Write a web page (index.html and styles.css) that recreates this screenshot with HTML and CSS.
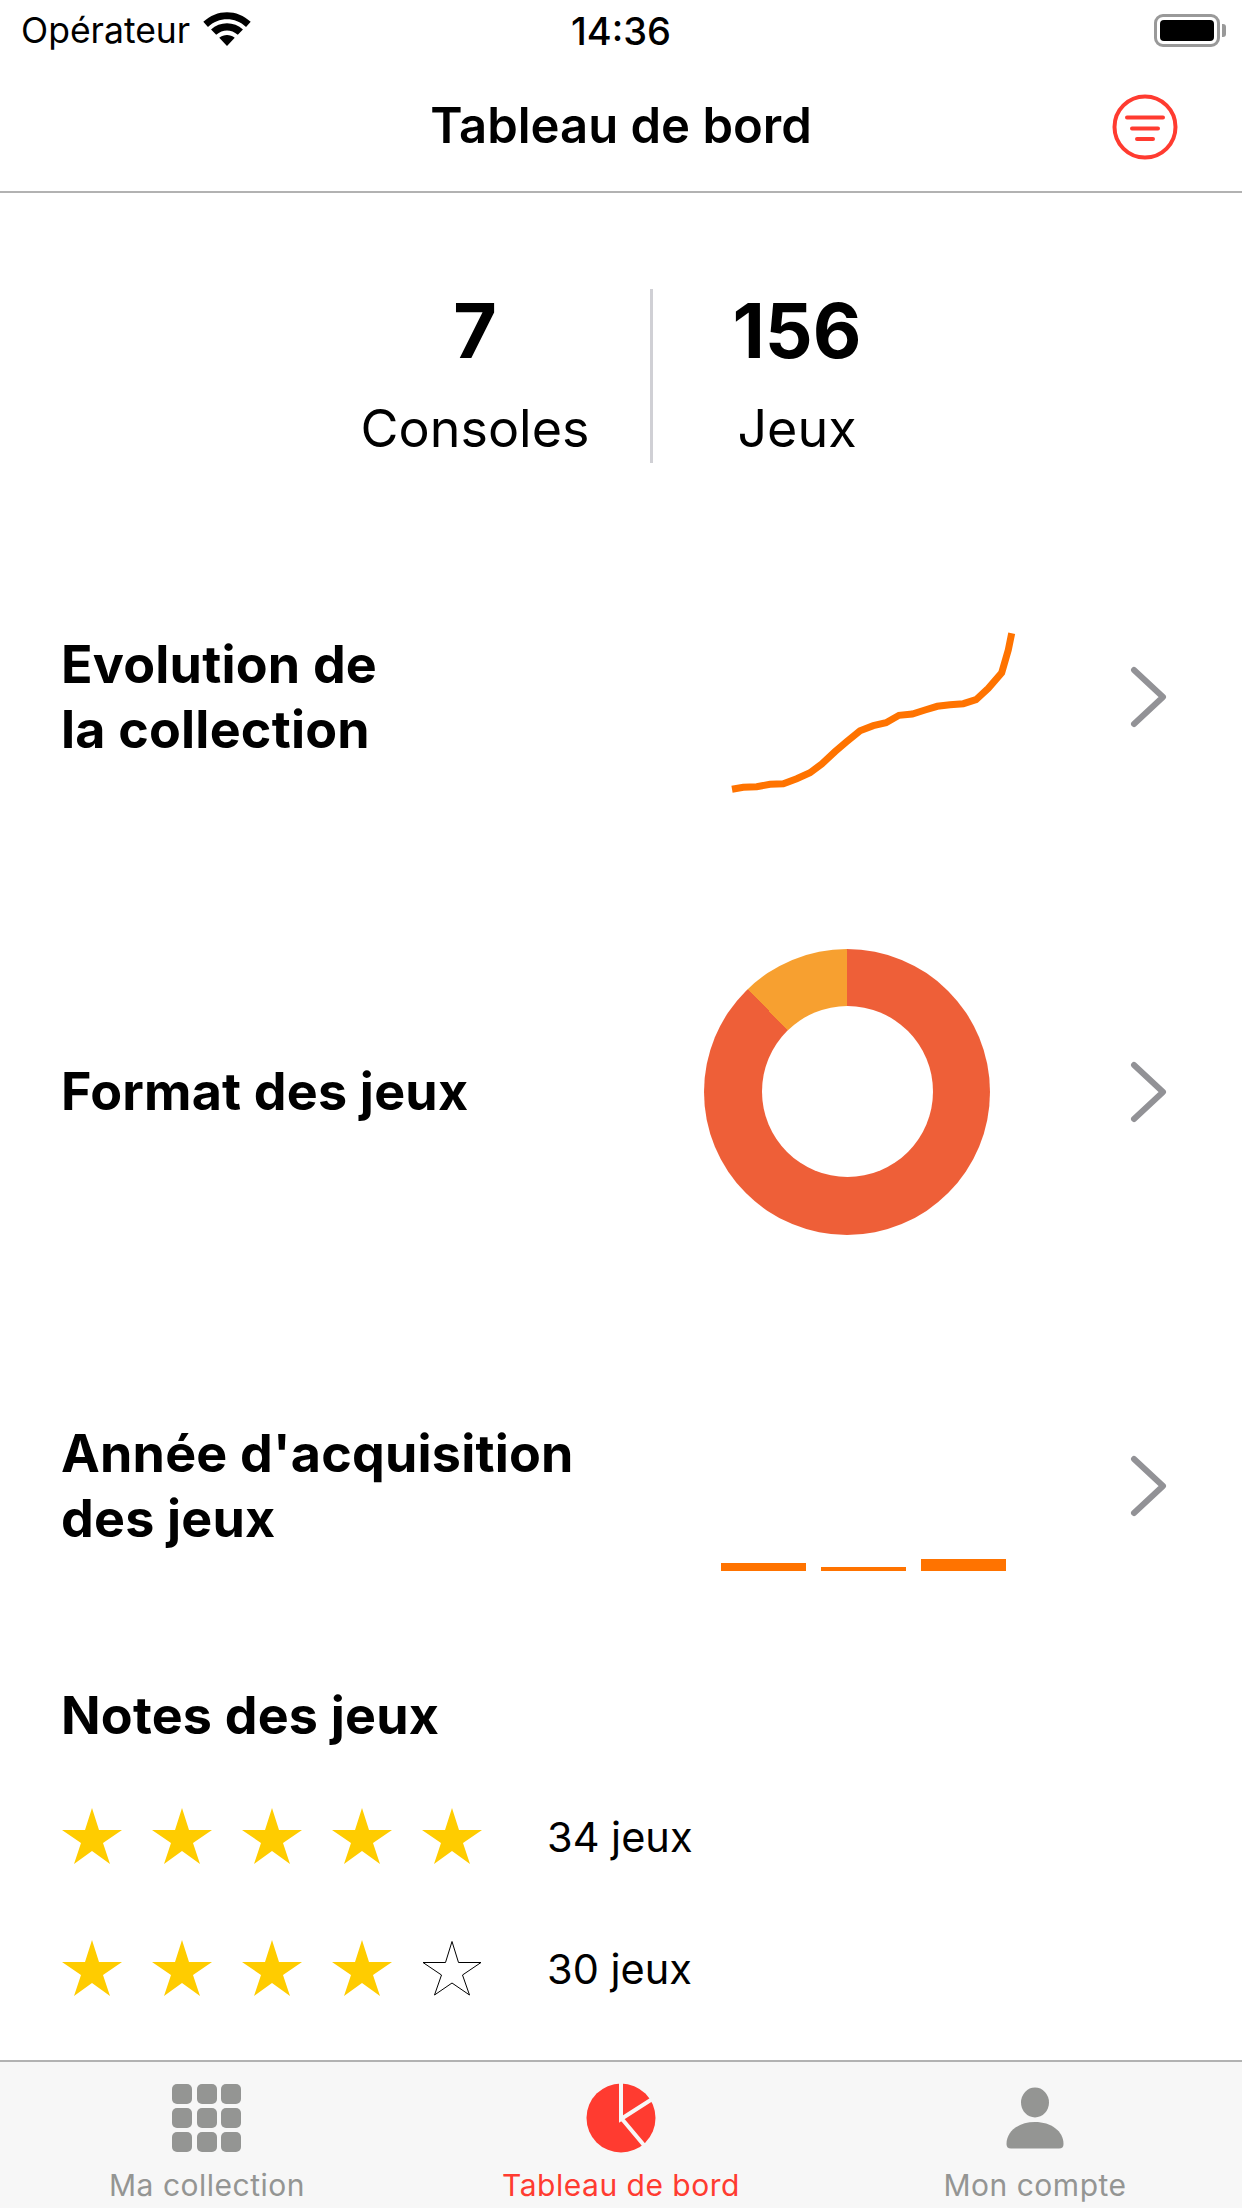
FILE: index.html
```html
<!DOCTYPE html>
<html lang="fr">
<head>
    <meta charset="UTF-8">
    <meta name="viewport" content="width=device-width, initial-scale=1.0">
    <title>Tableau de bord</title>
    <link rel="stylesheet" href="styles.css">
</head>
<body>
    <!-- Status bar -->
    <div class="status-bar">
        <div class="status-left">
            <span>Opérateur</span>
            <svg class="wifi-icon" width="48" height="35" viewBox="0 0 46 34">
                <path d="M0 9.5 C13 -3 33 -3 46 9.5 L41.5 14.500 C31 4.500 15 4.500 4.5 14.500 Z" fill="#000"/>
                <path d="M7.500 17 C16 9 30 9 38.500 17 L33.500 22 C27 16.500 19 16.500 12.500 22 Z" fill="#000"/>
                <path d="M15.500 25 C20 21.500 26 21.500 30.500 25 L23 33 Z" fill="#000"/>
            </svg>
        </div>
        <div class="status-time">14:36</div>
        <div class="status-right">
            <div class="battery"><div class="battery-level"></div></div>
            <div class="battery-cap"></div>
        </div>
    </div>

    <!-- Header -->
    <header class="nav-bar">
        <h1>Tableau de bord</h1>
        <svg class="filter-icon" width="66" height="66" viewBox="0 0 66 66">
            <circle cx="33" cy="33" r="30.500" fill="none" stroke="#ff3b30" stroke-width="4"/>
            <path d="M15 23.500 H51 M20 34.500 H46 M25 45 H41" stroke="#ff3b30" stroke-width="4" stroke-linecap="round"/>
        </svg>
    </header>

    <main>
        <!-- Counters -->
        <section class="counters">
            <div class="counter">
                <div class="counter-value">7</div>
                <div class="counter-label">Consoles</div>
            </div>
            <div class="counter">
                <div class="counter-value">156</div>
                <div class="counter-label">Jeux</div>
            </div>
        </section>

        <!-- Evolution -->
        <section class="chart-row">
            <h2>Evolution de<br>la collection</h2>
            <svg class="chart" width="310" height="190" viewBox="0 0 310 190">
                <polyline class="trend-line" points="28,187.300 39.300,185.300 52.700,184.700 66,182.300 79.300,181.700 92.700,176.700 106,170.700 117.700,162 131,149.700 142.700,139.700 156,128.700 169.300,123.700 182,120.700 195,113.300 208.300,112 221,108 233.300,104.300 246,102.700 259.300,101.700 272,97.700 284.300,86.300 297.700,70.700 304.300,48 307.700,31.300"/>
            </svg>
            <svg class="chevron" width="38" height="62" viewBox="0 0 38 62">
                <path d="M4 4 L33 31 L4 58" fill="none" stroke="#929296" stroke-width="6" stroke-linecap="round" stroke-linejoin="round"/>
            </svg>
        </section>

        <!-- Format -->
        <section class="chart-row">
            <h2>Format des jeux</h2>
            <div class="donut"><div class="donut-hole"></div></div>
            <svg class="chevron" width="38" height="62" viewBox="0 0 38 62">
                <path d="M4 4 L33 31 L4 58" fill="none" stroke="#929296" stroke-width="6" stroke-linecap="round" stroke-linejoin="round"/>
            </svg>
        </section>

        <!-- Acquisition -->
        <section class="chart-row">
            <h2>Année d'acquisition<br>des jeux</h2>
            <div class="bars">
                <div class="bar" style="height: 8px"></div>
                <div class="bar" style="height: 4px"></div>
                <div class="bar" style="height: 12px"></div>
            </div>
            <svg class="chevron" width="38" height="62" viewBox="0 0 38 62">
                <path d="M4 4 L33 31 L4 58" fill="none" stroke="#929296" stroke-width="6" stroke-linecap="round" stroke-linejoin="round"/>
            </svg>
        </section>

        <!-- Ratings -->
        <section class="ratings">
            <h2>Notes des jeux</h2>
            <div class="rating-row">
                <div class="stars">
                    <svg class="star" viewBox="0 0 60 56"><polygon points="30,0 37,22 60,22 41,35 48,56 30,43 12,56 19,35 0,22 23,22"/></svg>
                    <svg class="star" viewBox="0 0 60 56"><polygon points="30,0 37,22 60,22 41,35 48,56 30,43 12,56 19,35 0,22 23,22"/></svg>
                    <svg class="star" viewBox="0 0 60 56"><polygon points="30,0 37,22 60,22 41,35 48,56 30,43 12,56 19,35 0,22 23,22"/></svg>
                    <svg class="star" viewBox="0 0 60 56"><polygon points="30,0 37,22 60,22 41,35 48,56 30,43 12,56 19,35 0,22 23,22"/></svg>
                    <svg class="star" viewBox="0 0 60 56"><polygon points="30,0 37,22 60,22 41,35 48,56 30,43 12,56 19,35 0,22 23,22"/></svg>
                </div>
                <span class="rating-count">34 jeux</span>
            </div>
            <div class="rating-row">
                <div class="stars">
                    <svg class="star" viewBox="0 0 60 56"><polygon points="30,0 37,22 60,22 41,35 48,56 30,43 12,56 19,35 0,22 23,22"/></svg>
                    <svg class="star" viewBox="0 0 60 56"><polygon points="30,0 37,22 60,22 41,35 48,56 30,43 12,56 19,35 0,22 23,22"/></svg>
                    <svg class="star" viewBox="0 0 60 56"><polygon points="30,0 37,22 60,22 41,35 48,56 30,43 12,56 19,35 0,22 23,22"/></svg>
                    <svg class="star" viewBox="0 0 60 56"><polygon points="30,0 37,22 60,22 41,35 48,56 30,43 12,56 19,35 0,22 23,22"/></svg>
                    <svg class="star empty" viewBox="0 0 60 56"><polygon points="30,1.500 36.500,22.500 59,22.500 40.500,35 47.500,55 30,43 12.500,55 19.500,35 1,22.500 23.500,22.500"/></svg>
                </div>
                <span class="rating-count">30 jeux</span>
            </div>
        </section>
    </main>

    <!-- Tab bar -->
    <nav class="tab-bar">
        <div class="tab">
            <div class="tab-icon">
                <div class="grid-icon">
                    <span></span><span></span><span></span>
                    <span></span><span></span><span></span>
                    <span></span><span></span><span></span>
                </div>
            </div>
            <div class="tab-label">Ma collection</div>
        </div>
        <div class="tab active">
            <div class="tab-icon">
                <svg width="70" height="70" viewBox="0 0 70 70">
                    <circle cx="35" cy="35" r="34.500" fill="#ff3b30"/>
                    <path d="M35 -2 V36 L71 13 M36 36 L62 67" fill="none" stroke="#f7f7f7" stroke-width="4"/>
                </svg>
            </div>
            <div class="tab-label">Tableau de bord</div>
        </div>
        <div class="tab">
            <div class="tab-icon">
                <svg width="58" height="62" viewBox="0 0 58 62">
                    <ellipse cx="29" cy="15.500" rx="14" ry="15" fill="#949593"/>
                    <path d="M0.500 57 C0.500 44 13 35 29 35 C45 35 57.500 44 57.500 57 Q57.500 61.500 53 61.500 H5 Q0.500 61.500 0.500 57 Z" fill="#949593"/>
                </svg>
            </div>
            <div class="tab-label">Mon compte</div>
        </div>
    </nav>
</body>
</html>
```

FILE: styles.css
```css
/* General Styles */
* {
    box-sizing: border-box;
}

body {
    margin: 0;
    width: 1242px;
    height: 2208px;
    overflow: hidden;
    display: flex;
    flex-direction: column;
    background-color: #ffffff;
    color: #000000;
    font-family: Inter, "Liberation Sans", sans-serif;
}

/* Status bar */
.status-bar {
    height: 60px;
    display: grid;
    grid-template-columns: 1fr auto 1fr;
    align-items: center;
    font-size: 35.5px;
}

.status-left {
    display: flex;
    align-items: center;
    gap: 13px;
    padding-left: 21px;
}

.wifi-icon {
    margin-top: -2px;
}

.status-time {
    font-size: 38px;
    font-weight: 500;
    margin-top: 2px;
}

.status-right {
    display: flex;
    align-items: center;
    justify-content: flex-end;
    gap: 2px;
    padding-right: 16px;
}

.battery {
    width: 66px;
    height: 33px;
    padding: 3px;
    border: 3px solid #999999;
    border-radius: 9px;
}

.battery-level {
    height: 100%;
    background-color: #000000;
    border-radius: 4px;
}

.battery-cap {
    width: 4px;
    height: 13px;
    background-color: #999999;
    border-radius: 0 3px 3px 0;
}

/* Header */
.nav-bar {
    position: relative;
    height: 133px;
    display: flex;
    align-items: center;
    justify-content: center;
    border-bottom: 2px solid #b2b2b2;
}

.nav-bar h1 {
    margin: 0;
    font-size: 49px;
    font-weight: 600;
}

.filter-icon {
    position: absolute;
    right: 64px;
    top: 34px;
}

/* Main content */
main {
    flex: 1;
    overflow: hidden;
    display: flex;
    flex-direction: column;
}

h2 {
    margin: 0;
    font-size: 52px;
    line-height: 65px;
    font-weight: 700;
    letter-spacing: 0.2px;
}

/* Counters */
.counters {
    display: grid;
    grid-template-columns: 353px 288px;
    padding-left: 300px;
    margin: 96px 0 91px 0;
}

.counter {
    height: 174px;
    text-align: center;
}

.counter:first-child {
    border-right: 3px solid #d0d0d5;
}

.counter-value {
    font-size: 75px;
    line-height: 84px;
    font-weight: 700;
}

.counter-label {
    font-size: 52px;
    line-height: 64px;
    margin-top: 24px;
}

/* Chart rows */
.chart-row {
    height: 286px;
    margin-bottom: 108.500px;
    display: grid;
    grid-template-columns: 1fr 310px 38px;
    align-items: center;
    padding: 0 74px 0 61px;
    column-gap: 116px;
}

.chart {
    overflow: visible;
}

.trend-line {
    fill: none;
    stroke: #ff7300;
    stroke-width: 7;
}

.chevron {
    justify-self: end;
}

.donut {
    width: 286px;
    height: 286px;
    border-radius: 50%;
    background: conic-gradient(#ee5f38 0 87.800%, #f7a030 87.800% 100%);
    display: flex;
    align-items: center;
    justify-content: center;
}

.donut-hole {
    width: 171px;
    height: 171px;
    border-radius: 50%;
    background-color: #ffffff;
}

.bars {
    height: 170px;
    padding-left: 17px;
    display: flex;
    align-items: flex-end;
    gap: 15px;
}

.bar {
    width: 85px;
    background-color: #ff7300;
}

/* Ratings */
.ratings {
    padding-left: 61px;
    margin-top: -55px;
}

.rating-row {
    display: flex;
    align-items: center;
    height: 56px;
    margin-top: 76px;
}

.ratings h2 + .rating-row {
    margin-top: 60px;
}

.stars {
    display: flex;
    gap: 30px;
    padding-left: 1px;
}

.star {
    width: 60px;
    height: 56px;
    fill: #ffcc00;
}

.star.empty {
    fill: none;
    stroke: #000000;
    stroke-width: 1;
}

.rating-count {
    margin-left: 65px;
    margin-top: 3px;
    font-size: 41.500px;
}

/* Tab bar */
.tab-bar {
    height: 148px;
    flex-shrink: 0;
    display: grid;
    grid-template-columns: repeat(3, 1fr);
    background-color: #f7f7f7;
    border-top: 2px solid #b2b2b2;
}

.tab {
    display: flex;
    flex-direction: column;
    align-items: center;
    padding-top: 21px;
    color: #949593;
}

.tab.active {
    color: #ff3b30;
}

.tab-icon {
    height: 70px;
    display: flex;
    align-items: center;
    justify-content: center;
}

.tab-label {
    margin-top: 14px;
    font-size: 30px;
    line-height: 36px;
    letter-spacing: 0.500px;
}

.grid-icon {
    width: 70px;
    display: grid;
    grid-template-columns: repeat(3, 20px);
    gap: 4px 4.500px;
}

.grid-icon span {
    height: 20px;
    background-color: #949593;
    border-radius: 5px;
}
```
